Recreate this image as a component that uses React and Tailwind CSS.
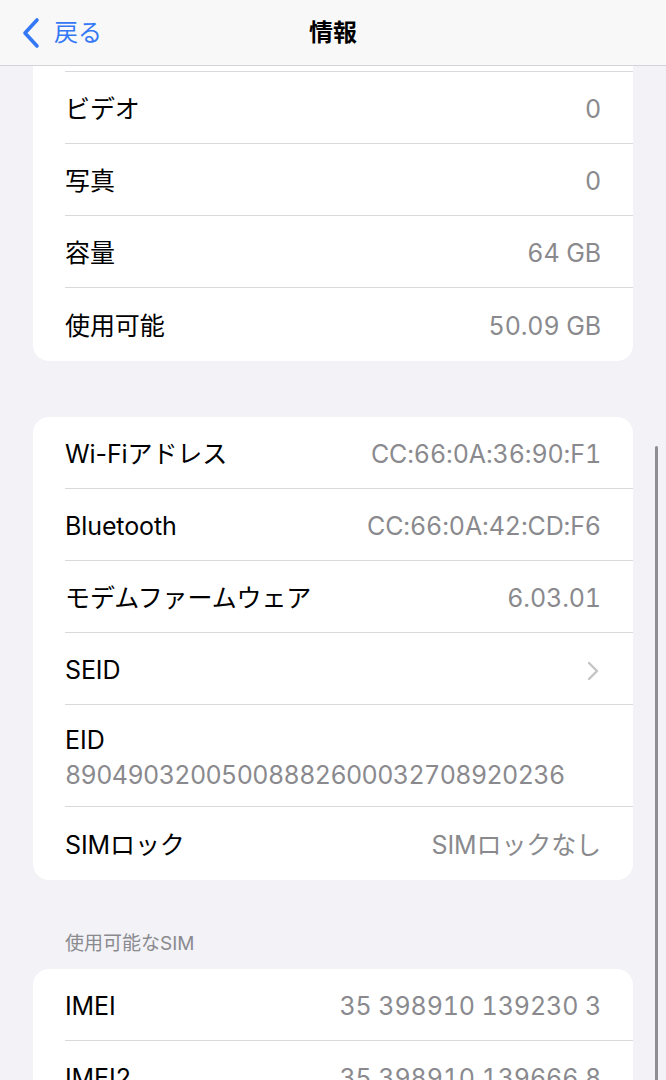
import React from 'react';

const font = { fontFamily: 'Inter, "Noto Sans CJK JP", sans-serif' };

function Row({ label, value, chevron, last }) {
  return (
    <div className="pl-8">
      <div className={`flex items-center justify-between pr-8 pt-[4px] ${last ? 'h-[73px]' : 'h-[72px] border-b border-[#d9d9dd]'}`}>
        <span className="text-[25px] text-black tracking-[-0.1px]">{label}</span>
        {chevron ? (
          <svg width="12" height="20" viewBox="0 0 12 20" className="mr-[2px]">
            <path d="M2 2l8 8-8 8" fill="none" stroke="#c4c4c7" strokeWidth="2.4" strokeLinecap="round" strokeLinejoin="round" />
          </svg>
        ) : (
          <span className="text-[25px] text-[#8a8a8e] tabular-nums tracking-[-0.1px]">{value}</span>
        )}
      </div>
    </div>
  );
}

export default function App() {
  return (
    <div className="h-screen w-full bg-[#f2f2f7] overflow-hidden relative" style={font}>
      {/* nav bar */}
      <div className="h-[66px] bg-[#f8f8f8] border-b border-[#d4d4d8] flex items-center relative">
        <div className="flex items-center pl-[20px] gap-[12px]">
          <svg width="22" height="32" viewBox="0 0 22 32">
            <path d="M17 3L5 16l12 13" fill="none" stroke="#3478f6" strokeWidth="3.6" strokeLinecap="round" strokeLinejoin="round" />
          </svg>
          <span className="text-[24px] text-[#3478f6]">戻る</span>
        </div>
        <div className="absolute inset-0 flex items-center justify-center pointer-events-none">
          <span className="text-[24px] font-bold text-black">情報</span>
        </div>
      </div>

      <div className="px-[33px]">
        {/* storage card (scrolled, top cut off) */}
        <div className="bg-white rounded-b-[16px]">
          <div className="pl-8">
            <div className="h-[6px] border-b border-[#d9d9dd]" />
          </div>
          <Row label="ビデオ" value="0" />
          <Row label="写真" value="0" />
          <Row label="容量" value="64 GB" />
          <Row label="使用可能" value="50.09 GB" last />
        </div>

        {/* network card */}
        <div className="bg-white rounded-[16px] mt-[56px]">
          <Row label="Wi-Fiアドレス" value="CC:66:0A:36:90:F1" />
          <Row label="Bluetooth" value="CC:66:0A:42:CD:F6" />
          <Row label="モデムファームウェア" value="6.03.01" />
          <Row label="SEID" chevron />
          <div className="pl-8">
            <div className="h-[102px] flex flex-col justify-center border-b border-[#d9d9dd] pt-[4px]">
              <span className="text-[25px] text-black leading-[34px]">EID</span>
              <span className="text-[25px] text-[#8a8a8e] tabular-nums tracking-[-0.6px] leading-[36px]">89049032005008882600032708920236</span>
            </div>
          </div>
          <Row label="SIMロック" value="SIMロックなし" last />
        </div>

        <div className="pl-8 pt-[51px] pb-[12px] text-[19px] text-[#8a8a8e] leading-[26px]">使用可能なSIM</div>

        <div className="bg-white rounded-[16px]">
          <Row label="IMEI" value="35 398910 139230 3" />
          <Row label="IMEI2" value="35 398910 139666 8" />
        </div>
      </div>

      {/* scroll indicator */}
      <div className="absolute right-[8px] top-[446px] w-[3px] h-[700px] rounded-full bg-[#8e8e93]" />
    </div>
  );
}
